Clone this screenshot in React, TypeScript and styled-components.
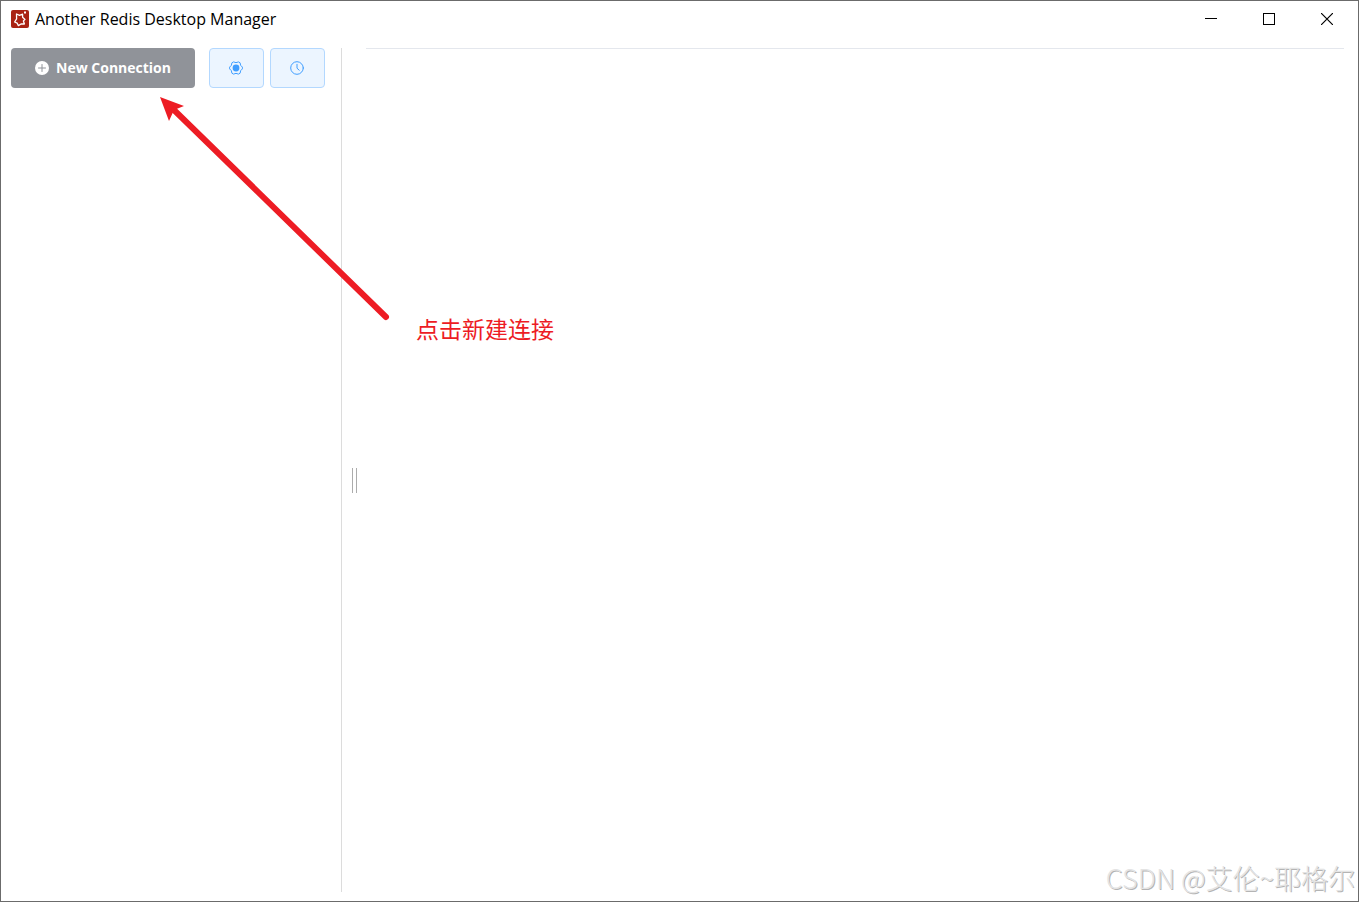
import React from "react";
import styled, { createGlobalStyle } from "styled-components";

const GlobalStyle = createGlobalStyle`
  * { box-sizing: border-box; }
  body { margin: 0; background: #fff; font-family: "Open Sans", "Noto Sans CJK SC", sans-serif; }
`;

const AppWindow = styled.div`
  position: relative;
  display: flex;
  flex-direction: column;
  min-height: 100vh;
  border: 1px solid #6b6b6b;
  background: #fff;
  overflow: hidden;
`;

const TitleBar = styled.header`
  display: flex;
  align-items: center;
  height: 36px;
  padding: 0 2px 0 10px;
`;

const Title = styled.h1`
  flex: 1;
  margin: 0 0 0 6px;
  font-size: 16px;
  line-height: 24px;
  font-weight: 400;
  color: #000;
`;

const WindowButton = styled.button`
  display: flex;
  align-items: center;
  justify-content: center;
  width: 58px;
  height: 36px;
  padding: 0;
  border: 0;
  background: transparent;
  color: #000;
`;

const Body = styled.div`
  flex: 1;
  display: flex;
  padding: 11px 14px 9px 10px;
`;

const Sidebar = styled.aside`
  width: 331px;
  border-right: 1px solid #dcdcdc;
`;

const Toolbar = styled.div`
  display: flex;
  align-items: center;
`;

const NewButton = styled.button`
  display: flex;
  align-items: center;
  justify-content: center;
  gap: 7px;
  width: 184px;
  height: 40px;
  margin-right: 14px;
  padding: 0;
  border: 0;
  border-radius: 4px;
  background: #909399;
  color: #fff;
  font: 700 14px/20px "Open Sans", sans-serif;
`;

const ToolButton = styled.button`
  display: flex;
  align-items: center;
  justify-content: center;
  width: 55px;
  height: 40px;
  padding: 0 1px 0 0;
  border: 1px solid #b3d8ff;
  border-radius: 4px;
  background: #ecf5ff;
  color: #409eff;

  & + & { margin-left: 6px; }
`;

const Divider = styled.div`
  display: flex;
  align-items: center;
  justify-content: center;
  width: 24px;
`;

const Grip = styled.span`
  width: 5px;
  height: 25px;
  margin-top: 21px;
  border: solid #acacac;
  border-width: 0 1px;
`;

const Content = styled.main`
  flex: 1;
  border-top: 1px solid #e4e7ed;
`;

const Arrow = styled.svg`
  position: absolute;
  left: 154px;
  top: 91px;
  pointer-events: none;
`;

const Note = styled.p`
  position: absolute;
  left: 415px;
  top: 310px;
  margin: 0;
  color: #ed1c24;
  font: 400 23px/34px "Noto Sans CJK SC", sans-serif;
`;

const Watermark = styled.p`
  position: absolute;
  right: 3px;
  bottom: 3px;
  margin: 0;
  color: #e4e4e4;
  text-shadow: 1px 1px 0 #b4b4b4;
  font: 300 27px/40px "Noto Sans CJK SC", sans-serif;
  white-space: nowrap;
`;

const AppLogo = () => (
  <svg width="18" height="18" viewBox="0 0 18 18" aria-hidden="true">
    <rect width="18" height="18" rx="2" fill="#a92314" />
    <path
      d="M5.5 4 8.5 5.4 11.6 4.2 11.6 7.2 14 9.4 12.4 11 13.4 14 10.4 13.8 7.4 15.6 6.2 13.2 3.6 12 5.6 8.8Z"
      fill="none" stroke="#fff" strokeWidth="1.3" strokeLinejoin="round"
    />
    <rect x="13" y="1.5" width="2" height="2" fill="#fff" />
  </svg>
);

const PlusIcon = () => (
  <svg width="14" height="14" viewBox="0 0 14 14" aria-hidden="true">
    <circle cx="7" cy="7" r="7" fill="#fff" />
    <path d="M7 3.5v7M3.5 7h7" stroke="#909399" strokeWidth="1" strokeLinecap="round" />
  </svg>
);

const SettingsIcon = () => (
  <svg width="14" height="14" viewBox="0 0 14 14" aria-hidden="true" fill="none" stroke="currentColor">
    <path
      d="M13.4 6.1V7.9Q11 9.3 11.1 12.2L9.5 13.1Q7 11.6 4.5 13.1L2.9 12.2Q3 9.3 .6 7.9V6.1Q3 4.7 2.9 1.8L4.5 .9Q7 2.4 9.5 .9L11.1 1.8Q11 4.7 13.4 6.1Z"
      strokeWidth="1" strokeLinejoin="round"
    />
    <circle cx="7" cy="7" r="3.4" fill="currentColor" stroke="none" />
  </svg>
);

const ClockIcon = () => (
  <svg width="14" height="14" viewBox="0 0 14 14" aria-hidden="true" fill="none" stroke="currentColor" strokeLinecap="round">
    <circle cx="7" cy="7" r="6.3" />
    <path d="M7 3.3V7.2L9.2 9.2" />
  </svg>
);

export default function App() {
  return (
    <>
      <GlobalStyle />
      <AppWindow>
        <TitleBar>
          <AppLogo />
          <Title>Another Redis Desktop Manager</Title>
          <WindowButton aria-label="Minimize">
            <svg width="12" height="12" viewBox="0 0 12 12"><path d="M0 5.5h12" stroke="currentColor" /></svg>
          </WindowButton>
          <WindowButton aria-label="Maximize">
            <svg width="12" height="12" viewBox="0 0 12 12"><rect x=".5" y=".5" width="11" height="11" fill="none" stroke="currentColor" /></svg>
          </WindowButton>
          <WindowButton aria-label="Close">
            <svg width="12" height="12" viewBox="0 0 12 12"><path d="M0 0 12 12M12 0 0 12" stroke="currentColor" strokeWidth="1.2" /></svg>
          </WindowButton>
        </TitleBar>
        <Body>
          <Sidebar>
            <Toolbar>
              <NewButton><PlusIcon />New Connection</NewButton>
              <ToolButton aria-label="Settings"><SettingsIcon /></ToolButton>
              <ToolButton aria-label="Command log"><ClockIcon /></ToolButton>
            </Toolbar>
          </Sidebar>
          <Divider><Grip /></Divider>
          <Content />
        </Body>
        <Arrow width="240" height="236" viewBox="0 0 240 236" aria-hidden="true">
          <path d="M5 5 29 14 19 18 14 29Z" fill="#ed1c24" />
          <path d="M19 18 231 225" stroke="#ed1c24" strokeWidth="6" strokeLinecap="round" />
        </Arrow>
        <Note>点击新建连接</Note>
        <Watermark>CSDN @艾伦~耶格尔</Watermark>
      </AppWindow>
    </>
  );
}
